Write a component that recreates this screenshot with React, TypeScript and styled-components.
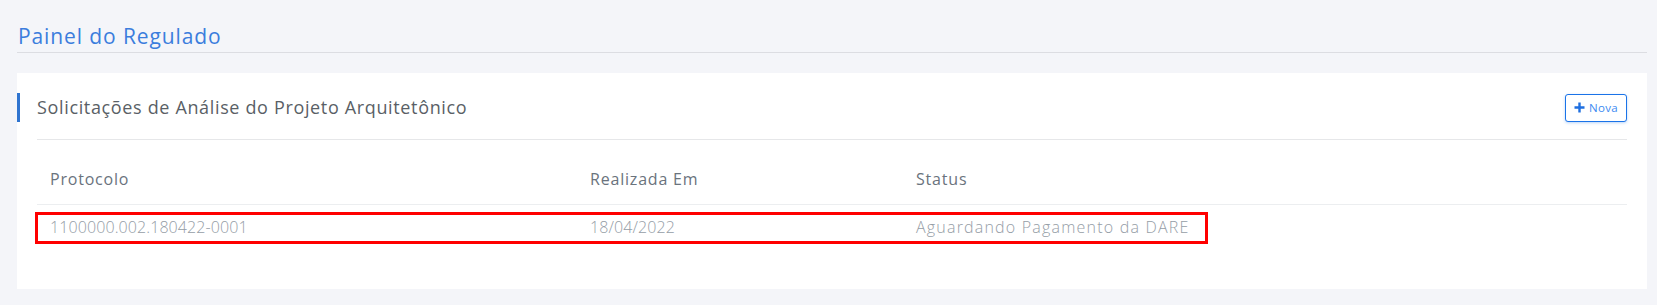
import React from 'react';
import styled, { createGlobalStyle } from 'styled-components';

const GlobalStyle = createGlobalStyle`
	html, body {
		margin: 0;
		padding: 0;
		background: #f4f5f9;
		font-family: 'Open Sans', 'Liberation Sans', sans-serif;
	}
	* {
		box-sizing: border-box;
	}
`;

interface Solicitacao {
	protocolo: string;
	realizadaEm: string;
	status: string;
}

const solicitacoes: Solicitacao[] = [
	{ protocolo: '1100000.002.180422-0001', realizadaEm: '18/04/2022', status: 'Aguardando Pagamento da DARE' },
];

const App: React.FC = () => {
	return (
		<>
			<GlobalStyle />
			<SPage>
				<h1 className='page-title'>Painel do Regulado</h1>
				<SCard>
					<div className='card-header'>
						<h2 className='card-title'>Solicitações de Análise do Projeto Arquitetônico</h2>
						<SButton type='button'>
							<svg width='11' height='11' viewBox='0 0 11 11'>
								<path d='M5.5 0.5v10M0.5 5.5h10' stroke='currentColor' strokeWidth='2.4' />
							</svg>
							<span>Nova</span>
						</SButton>
					</div>
					<div className='table-wrap'>
						<table>
							<thead>
								<tr>
									<th className='col-protocolo'>Protocolo</th>
									<th className='col-data'>Realizada Em</th>
									<th>Status</th>
								</tr>
							</thead>
							<tbody>
								{solicitacoes.map(s => (
									<tr key={s.protocolo}>
										<SCell $numeric>{s.protocolo}</SCell>
										<SCell $numeric>{s.realizadaEm}</SCell>
										<SCell>{s.status}</SCell>
									</tr>
								))}
							</tbody>
						</table>
						{/* marcação vermelha sobre a linha */}
						<SHighlight />
					</div>
				</SCard>
			</SPage>
		</>
	);
};

export default App;

const SPage = styled.div`
	width: 1657px;
	height: 305px;
	padding: 0 10px 0 17px;

	.page-title {
		margin: 0;
		padding: 23px 0 3px 1px;
		border-bottom: 1px solid #dcdde2;
		color: #3b7ddd;
		font-size: 21px;
		font-weight: 400;
		line-height: 26px;
		letter-spacing: 0.9px;
	}
`;

const SCard = styled.div`
	margin-top: 20px;
	padding: 20px 20px 19px;
	background: #fff;

	.card-header {
		display: flex;
		justify-content: space-between;
		align-items: center;
		margin-left: -20px;
		padding-left: 17px;
		border-left: 3px solid #2f74d0;
		height: 29px;
	}

	.card-title {
		margin: 0 0 1px;
		color: #5a5f66;
		font-size: 18px;
		font-weight: 400;
		line-height: 24px;
		letter-spacing: 0.65px;
	}

	.table-wrap {
		position: relative;
		margin-top: 17px;
		border-top: 1px solid #e6e7e9;
	}

	table {
		width: 100%;
		border-collapse: collapse;
	}

	th {
		padding: 29px 13px 15px;
		border-bottom: 1px solid #eceef0;
		color: #6a737d;
		font-size: 16px;
		font-weight: 400;
		line-height: 20px;
		letter-spacing: 0.8px;
		text-align: left;
	}

	.col-protocolo {
		width: 540px;
	}

	.col-data {
		width: 326px;
	}
`;

const SCell = styled.td<{ $numeric?: boolean }>`
	padding: 12px 13px 33px;
	color: #959da6;
	font-size: 16px;
	font-weight: 300;
	line-height: 20px;
	letter-spacing: ${p => (p.$numeric ? '0.1px' : '1.2px')};
`;

const SButton = styled.button`
	display: flex;
	align-items: center;
	gap: 4px;
	width: 62px;
	height: 28px;
	padding: 0 0 0 8px;
	border: 1px solid #1a73e8;
	border-radius: 3px;
	background: #fff;
	box-shadow: 0 1px 3px rgba(26, 115, 232, 0.3);
	color: #3d8bf2;
	font-family: 'Open Sans', 'Liberation Sans', sans-serif;
	font-size: 11.5px;
	letter-spacing: 0.3px;
	cursor: pointer;

	svg {
		color: #1f6fe0;
	}
`;

const SHighlight = styled.div`
	position: absolute;
	top: 72px;
	left: -2px;
	width: 1173px;
	height: 32px;
	border: 3px solid #f00;
	pointer-events: none;
`;
